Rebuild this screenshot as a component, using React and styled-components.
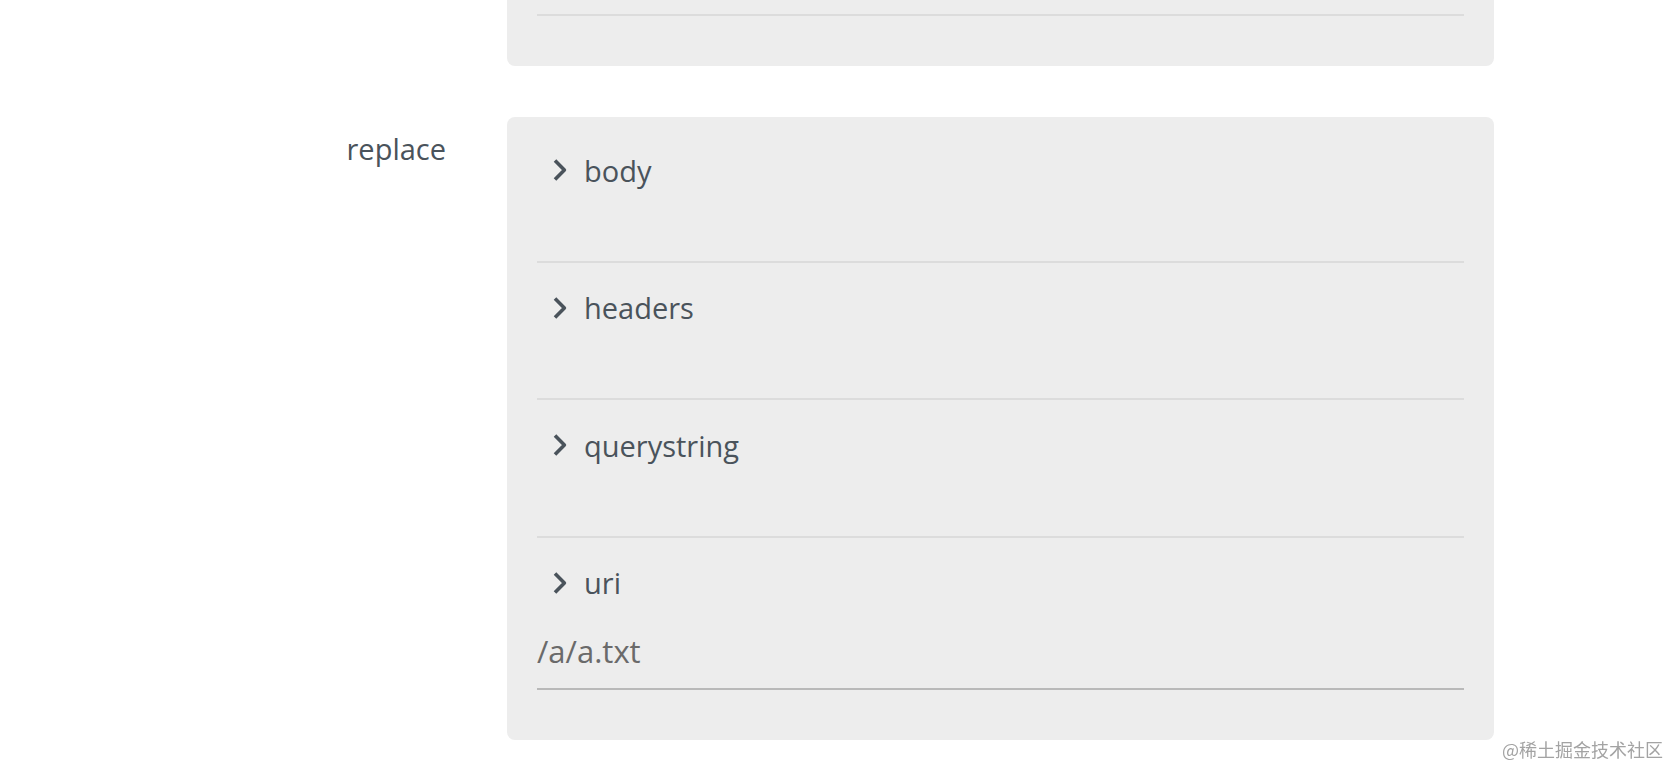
import React from "react";
import styled, { createGlobalStyle } from "styled-components";

const GlobalStyle = createGlobalStyle`
  body {
    margin: 0;
    background: #fff;
    font-family: "Open Sans", "Noto Sans", sans-serif;
    color: #4a535b;
  }
`;

const Chevron = () => (
  <svg width="16" height="24" viewBox="0 0 16 24" fill="none">
    <path
      d="M3 2.6 L12.4 12 L3 21.4"
      stroke="#4a535b"
      strokeWidth="3.6"
      strokeLinejoin="round"
    />
  </svg>
);

const sections = [
  { name: "body" },
  { name: "headers" },
  { name: "querystring" },
  { name: "uri", value: "/a/a.txt" },
];

const App = () => {
  return (
    <Page>
      <GlobalStyle />
      <Row>
        <Label />
        <Card cut>
          <Divider />
        </Card>
      </Row>
      <Row>
        <Label>replace</Label>
        <Card>
          {sections.map((s, i) => (
            <Section key={s.name} last={i === sections.length - 1}>
              <Title>
                <Chevron />
                <span>{s.name}</span>
              </Title>
              {s.value ? <Input readOnly value={s.value} /> : null}
            </Section>
          ))}
        </Card>
      </Row>
      <Mark>@稀土掘金技术社区</Mark>
    </Page>
  );
};

export default App;

const Page = styled.div`
  display: flex;
  flex-direction: column;
  gap: 51px;
  min-height: 770px;
`;

const Row = styled.div`
  display: grid;
  grid-template-columns: 446px 987px;
  column-gap: 61px;
  align-items: start;
`;

const Label = styled.div`
  text-align: right;
  font-size: 29px;
  font-weight: 500;
  line-height: 36px;
  padding-top: 14px;
  color: #4a535b;
`;

const Card = styled.div`
  background: #ededed;
  border-radius: ${(p) => (p.cut ? "0 0 8px 8px" : "8px")};
  padding: ${(p) => (p.cut ? "14px 30px 50px" : "8px 30px 50px")};
`;

const Divider = styled.div`
  height: 2px;
  background: #dcdcdc;
`;

const Section = styled.div`
  padding: 27px 0 ${(p) => (p.last ? "0" : "72.5px")};
  border-bottom: ${(p) => (p.last ? "none" : "2px solid #dcdcdc")};
`;

const Title = styled.div`
  display: flex;
  align-items: center;
  gap: 16px;
  height: 36px;
  padding-left: 15px;
  font-size: 29px;
  font-weight: 500;
  color: #4a535b;
  svg {
    flex: none;
  }
`;

const Input = styled.input`
  display: block;
  box-sizing: border-box;
  width: 100%;
  height: 60px;
  margin-top: 29px;
  padding: 0 0 16px;
  border: none;
  border-bottom: 2px solid #b9b9b9;
  background: transparent;
  font-family: "Open Sans", "Noto Sans", sans-serif;
  font-size: 31px;
  color: #6a6a6a;
  outline: none;
`;

const Mark = styled.div`
  position: fixed;
  right: 7px;
  bottom: 8px;
  font-family: "Noto Sans CJK SC", sans-serif;
  font-size: 18px;
  color: #a3a3a3;
`;
